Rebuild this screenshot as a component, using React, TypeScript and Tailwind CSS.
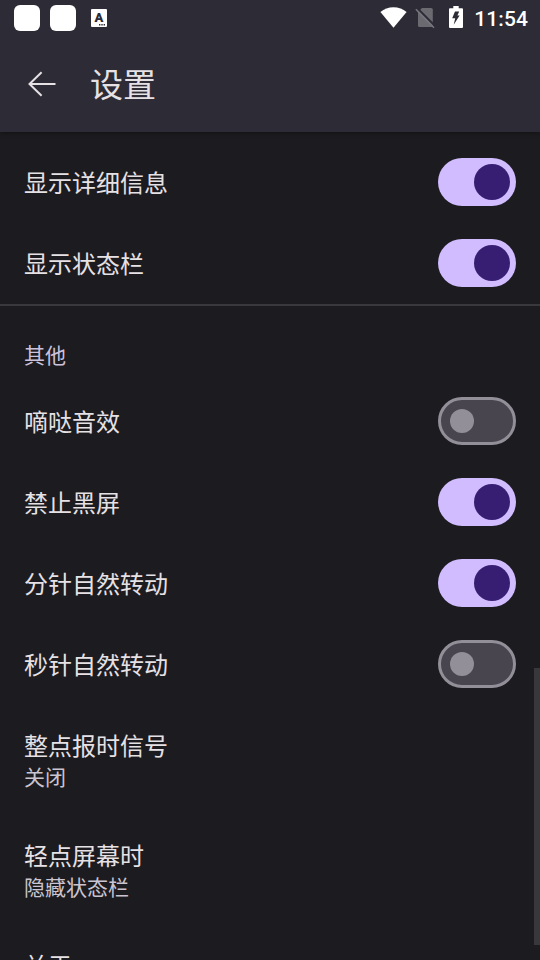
import React from 'react';

interface SwitchProps {
  checked: boolean;
}

interface SwitchRowProps {
  label: string;
  defaultChecked: boolean;
}

interface ValueRowProps {
  label: string;
  value?: string;
}

const DISPLAY_OPTIONS: SwitchRowProps[] = [
  { label: '显示详细信息', defaultChecked: true },
  { label: '显示状态栏', defaultChecked: true },
];

const OTHER_OPTIONS: SwitchRowProps[] = [
  { label: '嘀哒音效', defaultChecked: false },
  { label: '禁止黑屏', defaultChecked: true },
  { label: '分针自然转动', defaultChecked: true },
  { label: '秒针自然转动', defaultChecked: false },
];

const VALUE_OPTIONS: ValueRowProps[] = [
  { label: '整点报时信号', value: '关闭' },
  { label: '轻点屏幕时', value: '隐藏状态栏' },
  { label: '关于' },
];

const Switch: React.FC<SwitchProps> = ({ checked }) =>
  checked ? (
    <span className="flex h-12 w-[78px] items-center justify-end rounded-full bg-[#d0bcff] pr-1.5">
      <span className="size-9 rounded-full bg-[#371e73]" />
    </span>
  ) : (
    <span className="flex h-12 w-[78px] items-center rounded-full border-3 border-[#938f99] bg-[#49454f] pl-[9px]">
      <span className="size-6 rounded-full bg-[#938f99]" />
    </span>
  );

const SwitchRow: React.FC<SwitchRowProps> = ({ label, defaultChecked }) => {
  const [checked, setChecked] = React.useState(defaultChecked);

  return (
    <button
      type="button"
      role="switch"
      aria-checked={checked}
      onClick={() => setChecked(!checked)}
      className="flex h-[81px] w-full shrink-0 items-start justify-between px-6 pt-4 text-left"
    >
      <span className="text-2xl leading-[48px]">{label}</span>
      <Switch checked={checked} />
    </button>
  );
};

const ValueRow: React.FC<ValueRowProps> = ({ label, value }) => (
  <div className="h-[110px] shrink-0 px-6 pt-[23px]">
    <div className="text-2xl leading-[33px]">{label}</div>
    {value && <div className="text-[21px] leading-[30px] text-[#cac4d0]">{value}</div>}
  </div>
);

const StatusBar = () => (
  <div className="flex h-9 items-center justify-between pr-3 pl-3.5">
    <div className="flex items-center">
      <span className="size-[26px] rounded-md bg-white" />
      <span className="ml-2.5 size-[26px] rounded-md bg-white" />
      <span className="relative ml-[15px] flex h-[18px] w-4 justify-center rounded-[1px] bg-white font-['Roboto',sans-serif] text-[13px] leading-[17px] font-black text-[#2d2b35]">
        A
        <svg className="absolute right-0.5 bottom-px" width="6" height="2" viewBox="0 0 6 2" fill="#2d2b35">
          <path d="M0 0h1.4v1.4H0zM2.3 0h1.4v1.4H2.3zM4.6 0H6v1.4H4.6z" />
        </svg>
      </span>
    </div>
    <div className="flex items-center">
      <svg className="mb-0.5" width="27" height="22" viewBox="0 0 27 22" fill="#fff">
        <path d="M13.5 21.8 0.4 6C4.1 3.2 8.6 1.3 13.5 1.3S22.9 3.2 26.6 6z" />
      </svg>
      <svg className="ml-2" width="20" height="22" viewBox="0 0 20 22">
        <path d="M7 1h9.2q1.6 0 1.6 1.6V18.7q0 1.3-1.4 1.3H4.5Q3 20 3 18.5V5z" fill="#6b6a71" />
        <path d="M1.8 0.8 20 19" stroke="#2d2b35" strokeWidth="2" />
        <path d="M0.9 2.2 19 20.7" stroke="#77757d" strokeWidth="1.6" />
      </svg>
      <svg className="mb-0.5 ml-3.5" width="14" height="22" viewBox="0 0 14 22">
        <path d="M4.3 0h5.4v2.2H13q1 0 1 1V21q0 1-1 1H1q-1 0-1-1V3.2q0-1 1-1h3.3z" fill="#fff" />
        <path d="M6 5.5h4.2L8.4 9.6h2.2L4.7 18.7l1.5-6.5H3.2z" fill="#2d2b35" />
      </svg>
      <span className="mt-[3px] ml-[11px] font-['Roboto',sans-serif] text-[21px] leading-none font-medium tracking-[0.1px] text-white">
        11:54
      </span>
    </div>
  </div>
);

export default function App() {
  return (
    <div className="relative flex h-[960px] w-[540px] flex-col overflow-hidden bg-[#1c1b1f] font-['Noto_Sans_CJK_SC',sans-serif] text-[#e6e1e5]">
      <header className="relative z-10 h-[132px] shrink-0 bg-[#2d2b35] shadow-[0_1px_5px_rgba(0,0,0,0.4)]">
        <StatusBar />
        <div className="flex h-24 items-center pl-7">
          <svg width="28" height="26" viewBox="0 0 28 26" fill="none" stroke="currentColor" strokeWidth="2">
            <path d="M27.5 13H1.5M13.6 1.2 1.5 13l12.1 11.8" />
          </svg>
          <h1 className="mb-0.5 ml-[34px] text-[33px] leading-none">设置</h1>
        </div>
      </header>

      <main className="flex min-h-0 flex-1 flex-col overflow-hidden pt-2.5">
        {DISPLAY_OPTIONS.map(option => (
          <SwitchRow key={option.label} {...option} />
        ))}
        <h2 className="h-[77px] shrink-0 border-t-2 border-[#39383d] px-6 pt-[33px] text-[21px] leading-[30px] text-[#ccc2dc]">
          其他
        </h2>
        {OTHER_OPTIONS.map(option => (
          <SwitchRow key={option.label} {...option} />
        ))}
        {VALUE_OPTIONS.map(option => (
          <ValueRow key={option.label} {...option} />
        ))}
      </main>

      {/* scroll thumb */}
      <div className="absolute top-[668px] right-0 h-[277px] w-1.5 bg-[#38373b]" />
    </div>
  );
}
